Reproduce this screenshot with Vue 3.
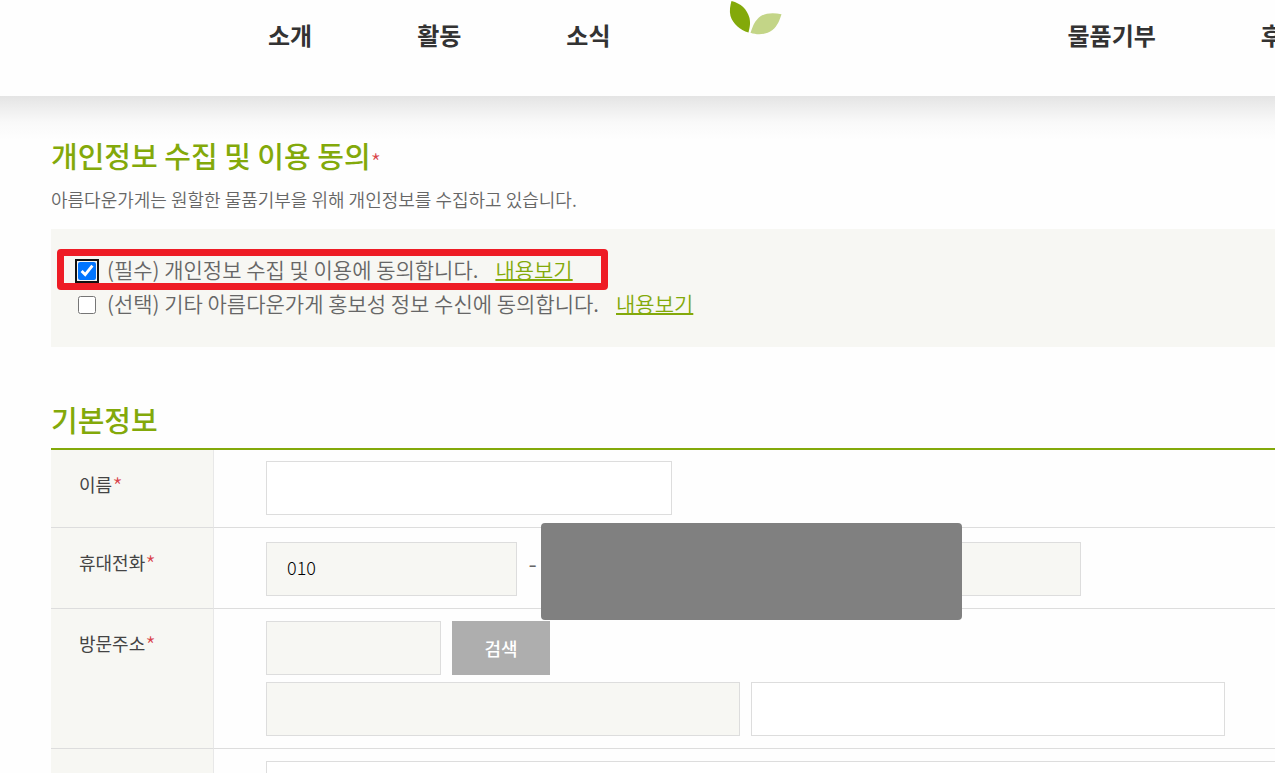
<script setup>
import { ref } from 'vue'

const required = ref(true)
const optional = ref(false)
const phone = ref('010')
</script>

<template>
  <div class="page">
    <header class="header">
      <nav class="nav">
        <a href="#about">소개</a>
        <a href="#activity">활동</a>
        <a href="#news">소식</a>
        <a href="#home" class="logo" aria-label="아름다운가게">
          <svg width="54" height="36" viewBox="0 0 54 36" aria-hidden="true">
            <path d="M2.5 1 C12 3.5 18 9 20.500 18 C21.800 24 20.500 28 19.500 32.500 C11 30 4 24 1.500 16 C.2 11 1.200 5.500 2.500 1Z" fill="#83a90a" />
            <path d="M52.500 14.300 C43 12 34 13 28.500 19 C25 22.500 23.500 27 21.500 32.800 C29 35.500 38 34.500 43.500 30 C48.500 26 50.500 20.500 52.500 14.300Z" fill="#c3d587" />
          </svg>
        </a>
        <a href="#goods">물품기부</a>
        <a href="#donate">후원</a>
      </nav>
    </header>

    <main class="content">
      <section class="consent">
        <h2>개인정보 수집 및 이용 동의<em>*</em></h2>
        <p class="desc">아름다운가게는 원할한 물품기부을 위해 개인정보를 수집하고 있습니다.</p>
        <div class="panel">
          <div class="agree">
            <input id="agree-required" v-model="required" type="checkbox" class="focused" />
            <label for="agree-required">(필수) 개인정보 수집 및 이용에 동의합니다.</label>
            <a href="#required">내용보기</a>
            <span class="marker"></span>
          </div>
          <div class="agree">
            <input id="agree-optional" v-model="optional" type="checkbox" />
            <label for="agree-optional">(선택) 기타 아름다운가게 홍보성 정보 수신에 동의합니다.</label>
            <a href="#optional">내용보기</a>
          </div>
        </div>
      </section>

      <section class="basic">
        <h2>기본정보</h2>
        <table>
          <tbody>
            <tr>
              <th scope="row"><label for="name">이름<em>*</em></label></th>
              <td><input id="name" type="text" class="field name" /></td>
            </tr>
            <tr>
              <th scope="row"><label for="phone1">휴대전화<em>*</em></label></th>
              <td>
                <div class="line">
                  <input id="phone1" v-model="phone" type="text" class="field tel" readonly />
                  <span class="dash">-</span>
                  <input type="text" class="field tel" readonly aria-label="휴대전화 가운데 자리" />
                  <span class="dash">-</span>
                  <input type="text" class="field tel" readonly aria-label="휴대전화 끝자리" />
                  <span class="mask"></span>
                </div>
              </td>
            </tr>
            <tr>
              <th scope="row"><label for="zip">방문주소<em>*</em></label></th>
              <td>
                <div class="line spaced">
                  <input id="zip" type="text" class="field zip" readonly />
                  <button type="button">검색</button>
                </div>
                <div class="line spaced second">
                  <input type="text" class="field addr" readonly aria-label="기본주소" />
                  <input type="text" class="field addr" aria-label="상세주소" />
                </div>
              </td>
            </tr>
            <tr>
              <th scope="row"></th>
              <td><input type="text" class="field full" aria-label="추가 입력" /></td>
            </tr>
          </tbody>
        </table>
      </section>
    </main>
  </div>
</template>

<style>
body {
  margin: 0;
  background: #fefefe;
}
</style>

<style scoped>
.page {
  height: 100vh;
  overflow: hidden;
  font-family: "Noto Sans CJK KR", "Noto Sans", sans-serif;
  font-weight: 350;
  color: #666;
}

.header {
  height: 96px;
}

.header::after {
  content: "";
  display: block;
  height: 44px;
  background: linear-gradient(#e4e4e4, #efefef 30%, #f9f9f9 60%, #fefefe);
}

.nav {
  display: flex;
  height: 96px;
  padding-left: 268px;
  gap: 105px;
  overflow: hidden;
  box-sizing: border-box;
}

.nav a {
  flex: none;
  padding-top: 17px;
  font-size: 24px;
  line-height: 36px;
  font-weight: 700;
  color: #333;
  text-decoration: none;
}

.nav .logo {
  width: 54px;
  padding: 0;
  margin-left: 13px;
  margin-right: 180px;
}

.nav svg {
  display: block;
}

.content {
  padding: 40px 0 0 51px;
}

h2 {
  margin: 0;
  font-size: 29px;
  line-height: 38px;
  font-weight: 500;
  color: #83a90a;
}

em {
  font-size: 24px;
  line-height: 0;
  font-style: normal;
  font-weight: 300;
  vertical-align: -4px;
  color: #d9444a;
}

.desc {
  margin: 12px 0 16px;
  font-size: 18px;
  line-height: 27px;
}

.panel {
  box-sizing: border-box;
  height: 118px;
  padding: 24px 27px;
  background: #f7f7f3;
}

.agree {
  position: relative;
  display: flex;
  align-items: flex-start;
  height: 34px;
  font-size: 21px;
  line-height: 32px;
  white-space: nowrap;
}

.agree input {
  width: 18px;
  height: 18px;
  margin: 9px 11px 0 0;
}

.focused {
  outline: 2px solid #101010;
  outline-offset: 1px;
  border-radius: 2px;
}

.agree a {
  margin-left: 17px;
  color: #83a90a;
  text-decoration-thickness: 2px;
  text-underline-offset: 1px;
  text-decoration-skip-ink: none;
}

.marker {
  position: absolute;
  left: -21px;
  top: -4px;
  box-sizing: border-box;
  width: 551px;
  height: 41px;
  border: 7px solid #ee1c25;
  border-radius: 4px;
}

.basic {
  margin-top: 53px;
}

table {
  width: 100%;
  margin-top: 10px;
  border-top: 2px solid #83a90a;
  border-spacing: 0;
}

th,
td {
  border-bottom: 1px solid #ddd;
  vertical-align: top;
}

th {
  box-sizing: border-box;
  width: 163px;
  padding: 21px 0 0 28px;
  border-right: 1px solid #e8e8e8;
  background: #f7f7f3;
  font-size: 18px;
  line-height: 26px;
  font-weight: 400;
  color: #444;
  text-align: left;
}

td {
  padding: 12px 0 12px 52px;
}

tr:first-child td {
  padding-top: 11px;
}

tr:nth-child(2) td {
  padding-top: 14px;
}

.field {
  display: block;
  box-sizing: border-box;
  height: 54px;
  margin: 0;
  padding: 0 20px 4px;
  border: 1px solid #ddd;
  border-radius: 0;
  background: #fff;
  font-family: inherit;
  font-size: 18px;
  font-weight: 300;
  color: #000;
  outline: none;
}

.field[readonly] {
  background: #f7f7f3;
}

.name {
  width: 406px;
}

.tel {
  width: 251px;
}

.zip {
  width: 175px;
}

.addr {
  width: 474px;
}

.full {
  width: 100%;
  border-right: 0;
}

.line {
  position: relative;
  display: flex;
}

.spaced {
  gap: 11px;
}

.second {
  margin-top: 7px;
}

.dash {
  width: 31px;
  font-size: 24px;
  line-height: 42px;
  text-align: center;
}

button {
  width: 98px;
  height: 54px;
  padding: 0;
  border: 0;
  background: #aeaeae;
  font-family: inherit;
  font-size: 18px;
  font-weight: 500;
  color: #fff;
}

.mask {
  position: absolute;
  left: 275px;
  top: -19px;
  width: 421px;
  height: 97px;
  border-radius: 4px;
  background: #808080;
}
</style>
